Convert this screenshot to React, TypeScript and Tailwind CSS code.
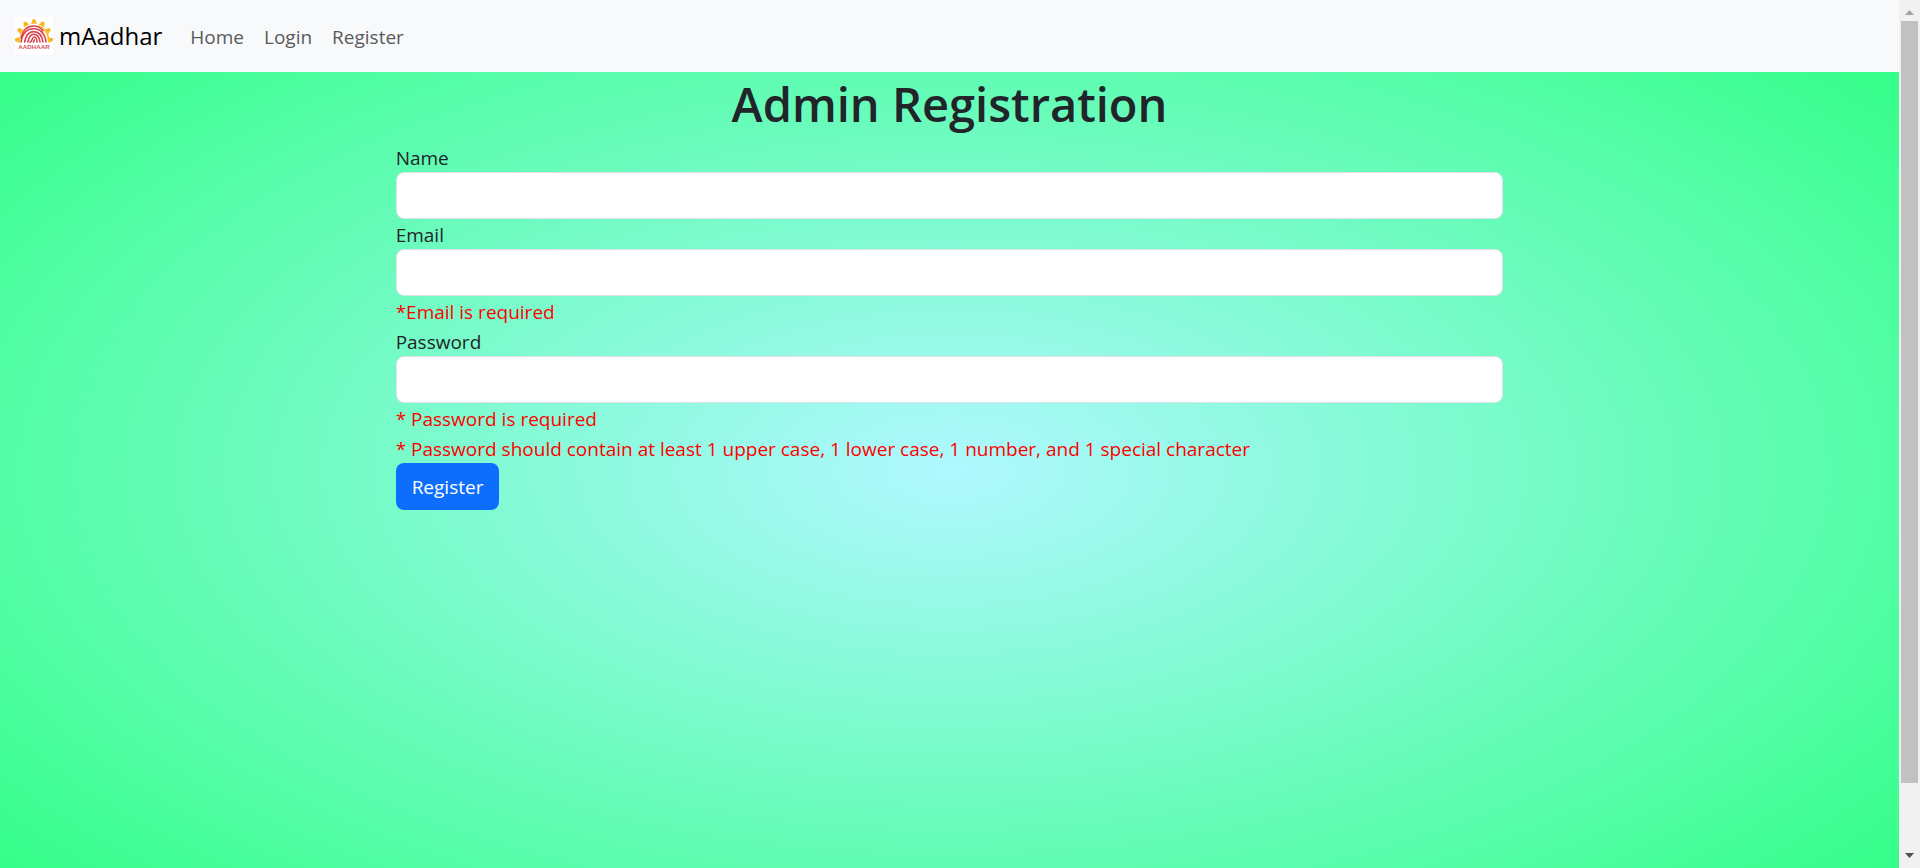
import React from "react";

const rays: [number, number, number][] = [
  [19, 4.6, 0],
  [10.5, 7, -28],
  [27.5, 7, 28],
  [4.8, 13.4, -56],
  [33.2, 13.4, 56],
  [2.4, 22.8, -80],
  [35.6, 22.8, 80],
];

function Logo() {
  return (
    <svg viewBox="0 0 38 38" className="size-[38px] shrink-0 bg-white" aria-hidden="true">
      {rays.map(([x, y, angle]) => (
        <path
          key={`${x}-${y}`}
          d="M-3.4 2.2 Q-2 1.2 -1.9 -.6 A1.9 1.9 0 0 1 1.9 -.6 Q2 1.2 3.4 2.2 Z"
          transform={`translate(${x} ${y}) rotate(${angle})`}
          fill="#fbb520"
        />
      ))}
      <path d="M23 8.8 C30.5 11 33.5 18 33.8 24.8" fill="none" stroke="#fcc02f" strokeWidth="1.6" />
      <path d="M4.2 24.8 C4.5 19 7 13 12 10" fill="none" stroke="#fcc02f" strokeWidth="1" />
      <g fill="none" stroke="#d8434e" strokeLinecap="round" strokeWidth="1.6">
        <path d="M6.2 21 C8 13 12.5 9 18.5 9 C23 9 26 11 28 13.8" />
        <path d="M6 25 C7.5 16.5 12 11.8 18.5 11.8 C25.5 11.8 29.8 17 31 25" />
        <path d="M9.6 25 C11 18 14 14.6 18.5 14.6 C23.5 14.6 27 18.5 28 25" />
        <path d="M12.8 25 C14 19.6 15.8 17.3 18.7 17.3 C22 17.3 24.3 20.5 25 25" />
        <path d="M15 25.2 C17.6 24 17.2 20 19 20 C20.8 20 21.8 22.5 22 25" />
        <path d="M18.4 25 C19 24.6 19.3 23.8 19.3 23" />
      </g>
      <text
        x="19"
        y="32"
        textAnchor="middle"
        fontFamily="Liberation Sans, sans-serif"
        fontWeight="700"
        fontSize="6.2"
        fill="#d8525c"
      >
        AADHAAR
      </text>
    </svg>
  );
}

function Field({ id, label, type, errors = [] }: { id: string; label: string; type: string; errors?: string[] }) {
  return (
    <div className="flex flex-col">
      <label htmlFor={id} className="pt-0.5 leading-7">
        {label}
      </label>
      <input
        id={id}
        name={id}
        type={type}
        className="h-[47px] w-full rounded-lg border border-[#dee2e6] bg-white px-4 outline-none focus:border-[#86b7fe]"
      />
      {errors.map((error) => (
        <p key={error} className="pt-0.5 leading-7 text-[#ff0000]">
          {error}
        </p>
      ))}
    </div>
  );
}

function ScrollRail() {
  return (
    <div className="flex h-screen w-[21px] shrink-0 flex-col items-center bg-[#f1f1f1]" aria-hidden="true">
      <div className="flex h-[21px] items-center pt-1">
        <svg viewBox="0 0 9 5" className="h-[5px] w-[9px]">
          <path d="M0 5 L4.5 0 L9 5 Z" fill="#a3a3a3" />
        </svg>
      </div>
      <div className="flex w-[17px] grow flex-col">
        <div className="grow-[12] bg-[#c1c1c1]" />
        <div className="grow" />
      </div>
      <div className="flex h-[21px] items-center pb-1">
        <svg viewBox="0 0 9 5" className="h-[5px] w-[9px]">
          <path d="M0 0 L4.5 5 L9 0 Z" fill="#505050" />
        </svg>
      </div>
    </div>
  );
}

export default function App() {
  return (
    <div className="flex min-h-screen font-['Open_Sans','Noto_Sans',sans-serif] text-[19px] text-[#212529]">
      <div className="flex min-w-0 grow flex-col bg-[radial-gradient(ellipse_at_center,#b0f8ff_0%,#2bff80_100%)] bg-[length:100%_calc(100vh+72px)] bg-no-repeat">
        <nav className="flex h-[72px] items-center bg-[#f8f9fa] px-[15px]">
          <a href="#" className="flex items-center gap-1.5 text-[24px] text-black">
            <Logo />
            mAadhar
          </a>
          <div className="ml-[18px] flex pt-0.5 text-[#595a5b]">
            <a href="#home" className="px-[10px]">Home</a>
            <a href="#login" className="px-[10px]">Login</a>
            <a href="#register" className="px-[10px]">Register</a>
          </div>
        </nav>
        <main className="grow">
          <h1 className="mb-2 pt-0.5 text-center text-[47px] leading-[60px] font-semibold">Admin Registration</h1>
          <form className="mx-auto w-7/12" onSubmit={(event) => event.preventDefault()}>
            <Field id="name" label="Name" type="text" />
            <Field id="email" label="Email" type="email" errors={["*Email is required"]} />
            <Field
              id="password"
              label="Password"
              type="password"
              errors={[
                "* Password is required",
                "* Password should contain at least 1 upper case, 1 lower case, 1 number, and 1 special character",
              ]}
            />
            <button type="submit" className="h-[47px] rounded-lg bg-[#0d6efd] px-4 pt-0.5 text-white">
              Register
            </button>
          </form>
        </main>
      </div>
      <ScrollRail />
    </div>
  );
}
